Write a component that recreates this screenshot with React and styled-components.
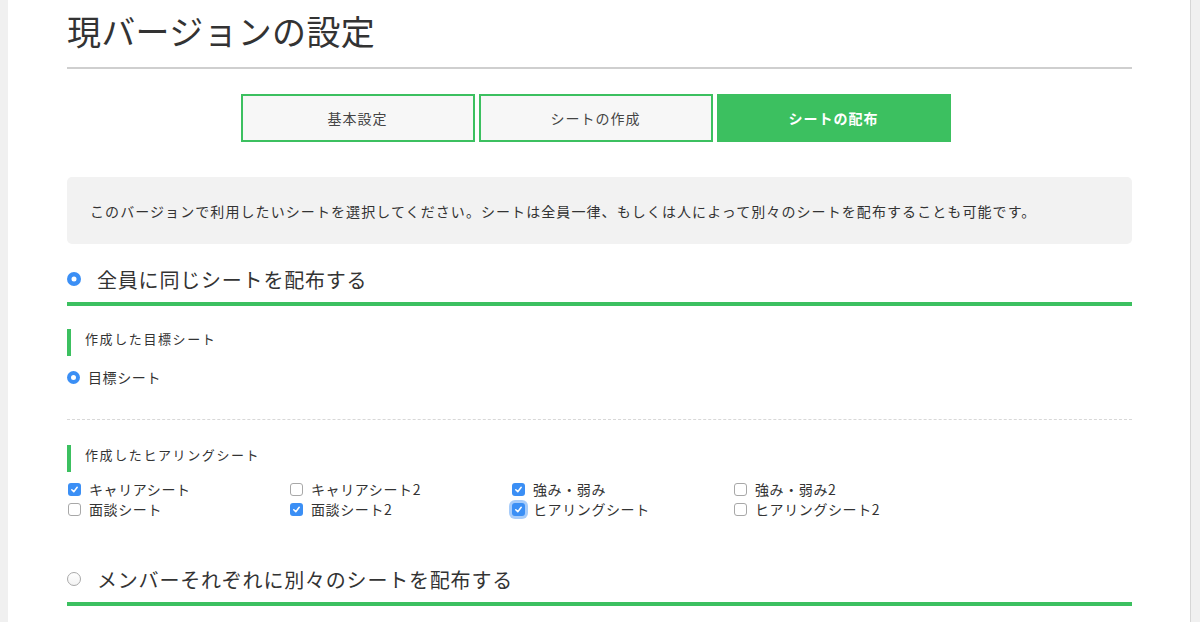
import React from "react";
import styled, { createGlobalStyle, css } from "styled-components";

const GlobalStyle = createGlobalStyle`
  html, body {
    margin: 0;
    padding: 0;
    background: #f0f0f0;
  }
  body {
    font-family: "Noto Sans CJK JP", "Noto Sans", sans-serif;
    color: #333;
  }
`;

const green = "#3cc060";
const blue = "#3b8ff5";

const Page = styled.div`
  margin-left: 8px;
  width: 1183px;
  min-height: 622px;
  background: #fff;
  border-right: 1px solid #d6d6d6;
  box-sizing: border-box;
  padding: 0 58px 0 59px;
  overflow: hidden;
`;

const Title = styled.h1`
  margin: 0;
  padding: 9px 0 14px;
  font-size: 34px;
  line-height: 44px;
  font-weight: 400;
  letter-spacing: 0.3px;
  color: #333;
  border-bottom: 2px solid #cfcfcf;
`;

const Tabs = styled.div`
  display: flex;
  justify-content: center;
  gap: 4px;
  margin-top: 25px;
  padding-right: 8px;
`;

const Tab = styled.div`
  width: 234px;
  height: 48px;
  box-sizing: border-box;
  display: flex;
  align-items: center;
  justify-content: center;
  font-size: 14px;
  letter-spacing: 1px;
  border: 2px solid ${green};
  background: #f7f7f7;
  color: #444;
  ${(p) =>
    p.$active &&
    css`
      background: ${green};
      color: #fff;
      font-weight: 700;
    `}
`;

const Info = styled.div`
  margin-top: 35px;
  height: 67px;
  background: #f2f2f2;
  border-radius: 5px;
  display: flex;
  align-items: center;
  padding: 0 23px;
  font-size: 14px;
  letter-spacing: 1.08px;
  color: #333;
`;

const SectionHead = styled.div`
  margin-top: ${(p) => p.$top}px;
  display: flex;
  align-items: center;
  height: 30px;
  padding-bottom: 8px;
  border-bottom: 4px solid ${green};
  font-size: 20px;
  letter-spacing: 0.8px;
  color: #333;
`;

const Radio = styled.span`
  width: ${(p) => p.$size}px;
  height: ${(p) => p.$size}px;
  border-radius: 50%;
  box-sizing: border-box;
  flex-shrink: 0;
  margin: 0 ${(p) => p.$gap}px 0 0;
  ${(p) =>
    p.$checked
      ? css`
          background: #fff;
          box-shadow: inset 0 0 0 ${(p.$size - 5) / 2}px ${blue};
        `
      : css`
          background: linear-gradient(#fff, #f3f3f3);
          border: 1px solid #a9a9a9;
        `}
`;

const SubHead = styled.div`
  margin-top: ${(p) => p.$top}px;
  border-left: 4px solid ${green};
  height: 27px;
  padding-left: 14px;
  display: flex;
  align-items: center;
  padding-bottom: 9px;
  box-sizing: border-box;
  font-size: 13px;
  letter-spacing: 1.6px;
  color: #333;
`;

const Option = styled.label`
  display: flex;
  align-items: center;
  font-size: 14px;
  line-height: 20px;
  letter-spacing: 0.6px;
  color: #333;
`;

const RadioRow = styled(Option)`
  margin-top: 11px;
`;

const Dashed = styled.div`
  margin-top: 32px;
  border-top: 1px dashed #d8d8d8;
`;

const Grid = styled.div`
  margin-top: 7px;
  display: grid;
  grid-template-columns: repeat(4, 222px);
  grid-auto-rows: 20px;
`;

const Box = styled.span`
  width: 13px;
  height: 13px;
  border-radius: 3px;
  box-sizing: border-box;
  margin: 0 8px 0 1px;
  flex-shrink: 0;
  display: flex;
  align-items: center;
  justify-content: center;
  ${(p) =>
    p.$checked
      ? css`
          background: ${blue};
        `
      : css`
          background: #fff;
          border: 1px solid #a8a8a8;
        `}
  ${(p) =>
    p.$focus &&
    css`
      box-shadow: 0 0 0 3px rgba(59, 143, 245, 0.45);
    `}
`;

const Check = () => (
  <svg width="9" height="9" viewBox="0 0 10 10">
    <path d="M2 5.3 L4.2 7.4 L8 2.6" fill="none" stroke="#fff" strokeWidth="1.7" strokeLinecap="round" strokeLinejoin="round" />
  </svg>
);

const sheets = [
  { label: "キャリアシート", checked: true },
  { label: "キャリアシート2" },
  { label: "強み・弱み", checked: true },
  { label: "強み・弱み2" },
  { label: "面談シート" },
  { label: "面談シート2", checked: true },
  { label: "ヒアリングシート", checked: true, focus: true },
  { label: "ヒアリングシート2" },
];

export default function App() {
  return (
    <>
      <GlobalStyle />
      <Page>
        <Title>現バージョンの設定</Title>
        <Tabs>
          <Tab>基本設定</Tab>
          <Tab>シートの作成</Tab>
          <Tab $active>シートの配布</Tab>
        </Tabs>
        <Info>
          このバージョンで利用したいシートを選択してください。シートは全員一律、もしくは人によって別々のシートを配布することも可能です。
        </Info>

        <SectionHead $top={20}>
          <Radio $checked $size={14} $gap={16} />
          全員に同じシートを配布する
        </SectionHead>

        <SubHead $top={23}>作成した目標シート</SubHead>
        <RadioRow>
          <Radio $checked $size={13} $gap={8} />
          目標シート
        </RadioRow>

        <Dashed />

        <SubHead $top={25}>作成したヒアリングシート</SubHead>
        <Grid>
          {sheets.map((s) => (
            <Option key={s.label}>
              <Box $checked={s.checked} $focus={s.focus}>
                {s.checked && <Check />}
              </Box>
              {s.label}
            </Option>
          ))}
        </Grid>

        <SectionHead $top={45}>
          <Radio $size={14} $gap={16} />
          メンバーそれぞれに別々のシートを配布する
        </SectionHead>
      </Page>
    </>
  );
}
